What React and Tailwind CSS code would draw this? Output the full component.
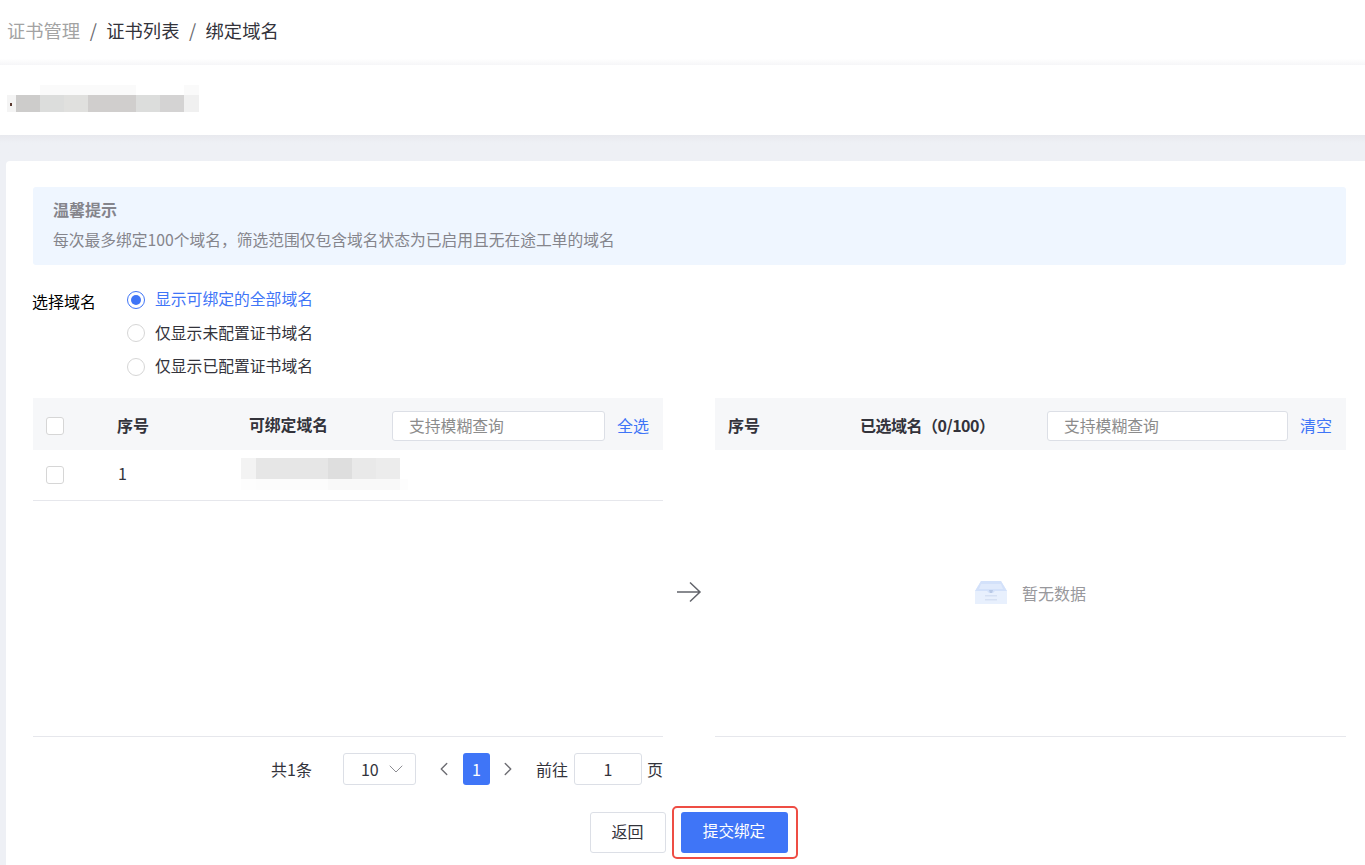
import { ChevronDown, ChevronLeft, ChevronRight } from "lucide-react";

const font = { fontFamily: '"Noto Sans CJK SC", "Liberation Sans", sans-serif' };

const titleBlur = [
  [
    [33, "#ffffff"],
    [96, "#fafafa"],
    [48, "#ffffff"],
    [15, "#fafafa"],
  ],
  [
    [9, "#f4f4f4"],
    [24, "#cdcccb"],
    [24, "#dcdddc"],
    [24, "#e0e0de"],
    [48, "#d0cecd"],
    [24, "#dcdddc"],
    [24, "#d4d3d3"],
    [15, "#f0f0f0"],
  ],
];

const domainBlur = [
  [
    [15, "#f3f3f3"],
    [72, "#e6e6e6"],
    [24, "#dedede"],
    [24, "#e9e9e9"],
    [24, "#ececec"],
  ],
  [
    [15, "#fdfdfd"],
    [72, "#fcfcfc"],
    [72, "#f9f9f9"],
    [8, "#fdfdfd"],
  ],
];

const Blur = ({ rows, heights }) => (
  <div className="flex flex-col">
    {rows.map((row, i) => (
      <div key={i} className="flex" style={{ height: heights[i] }}>
        {row.map(([w, c], j) => (
          <div key={j} style={{ width: w, background: c }} />
        ))}
      </div>
    ))}
  </div>
);

const Radio = ({ checked, children }) => (
  <label className="flex items-center h-[33.5px]">
    <span
      className={`w-[18px] h-[18px] rounded-full border flex items-center justify-center ${
        checked ? "border-[#3f75f7]" : "border-[#d6d6d6]"
      }`}
    >
      {checked && <span className="w-[10px] h-[10px] rounded-full bg-[#3f75f7]" />}
    </span>
    <span className={`ml-[10px] mb-[1px] text-[15.8px] ${checked ? "text-[#3f75f7]" : "text-[#33333b]"}`}>
      {children}
    </span>
  </label>
);

const Checkbox = () => (
  <span className="block w-[18px] h-[18px] rounded-[3px] border border-[#d6d6d6] bg-white" />
);

const SearchInput = ({ className }) => (
  <div
    className={`h-[30px] pl-4 flex items-center rounded-[3px] border border-[#dcdfe6] bg-white text-[#8c8c8c] text-[15.8px] ${className}`}
  >
    支持模糊查询
  </div>
);

const EmptyIcon = () => (
  <svg width="32" height="23" viewBox="0 0 32 23">
    <path d="M6 0H26L32 10V23H0V10Z" fill="#e8f0fd" />
    <path d="M6 0H26L32 10H20L18 12H14L12 10H0Z" fill="#d3e1fa" />
    <path d="M4 8L6 3H26L28 8Z" fill="#e0eafc" />
    <path d="M14 9H18L17 12H15Z" fill="#b9c9e6" />
    <rect x="10" y="14" width="12" height="1.5" fill="#d5e0f3" />
    <rect x="10" y="18" width="12" height="1.5" fill="#d5e0f3" />
  </svg>
);

export default function App() {
  return (
    <div style={font} className="h-[865px] overflow-hidden bg-[#eef0f5] text-[#33333b]">
      <div className="h-[65px] bg-white pl-[7px] pt-[15px] text-[18.3px] leading-[30px] flex gap-[9.5px] bg-gradient-to-b from-white from-[90%] to-[#f6f6f8]">
        <span className="text-[#a3a3a3]">证书管理</span>
        <span className="text-[#6a6a70]">/</span>
        <span>证书列表</span>
        <span className="text-[#6a6a70]">/</span>
        <span>绑定域名</span>
      </div>
      <div className="h-[70px] bg-white pl-[7px] pt-[20px]">
        <div className="relative">
          <Blur rows={titleBlur} heights={[10, 17]} />
          <span className="absolute left-[3px] top-[18px] w-[2px] h-[3px] bg-[#5a3a30]" />
        </div>
      </div>
      <div className="h-[26px] bg-gradient-to-b from-[#e8e9ee] to-[#eef0f5] to-[30%]" />

      <div className="ml-[6px] h-[704px] bg-white rounded-tl-[4px] pt-[26px] pl-[27px] pr-[19px]">
        <div className="h-[78px] bg-[#eff6ff] rounded-[3px] pl-5 pt-[9px] text-base leading-[26px] text-[#85858c]">
          <div className="font-bold">温馨提示</div>
          <div className="mt-[5px] text-[15.75px]">每次最多绑定100个域名，筛选范围仅包含域名状态为已启用且无在途工单的域名</div>
        </div>

        <div className="flex mt-[18px]">
          <div className="w-[95px] -ml-px pt-[4px] text-base leading-[28px] text-black">选择域名</div>
          <div className="flex flex-col">
            <Radio checked>显示可绑定的全部域名</Radio>
            <Radio>仅显示未配置证书域名</Radio>
            <Radio>仅显示已配置证书域名</Radio>
          </div>
        </div>

        <div className="flex mt-[14px]">
          <div className="w-[630px] h-[339px] flex flex-col border-b border-[#e6e7ec]">
            <div className="h-[52px] bg-[#f6f7f9] flex items-center pl-[13px] pt-1 text-base">
              <Checkbox />
              <span className="ml-[53px] w-[132px] mb-[2px] font-bold">序号</span>
              <span className="w-[143px] mb-[2px] font-bold text-[15.8px]">可绑定域名</span>
              <SearchInput className="w-[213px]" />
              <span className="ml-3 mb-[2px] text-[#3f75f7]">全选</span>
            </div>
            <div className="h-[51px] border-b border-[#e6e7ec] flex items-center pl-[13px] text-base">
              <Checkbox />
              <span className="ml-[54px] w-[123px] mb-[4px]">1</span>
              <div className="-mt-[1px]">
                <Blur rows={domainBlur} heights={[21, 11]} />
              </div>
            </div>
          </div>

          <div className="w-[52px] h-[339px] flex items-center justify-center pt-[49px]">
            <svg width="26" height="22" viewBox="0 0 26 22" fill="none" stroke="#62646b" strokeWidth="1.5">
              <path d="M1 11H24M14 1.5L24 11L14 20.5" />
            </svg>
          </div>

          <div className="w-[631px] h-[339px] flex flex-col border-b border-[#e6e7ec]">
            <div className="h-[52px] bg-[#f6f7f9] flex items-center pl-[13px] pt-1 text-base">
              <span className="w-[132px] mb-[2px] font-bold">序号</span>
              <span className="w-[187px] mb-[2px] font-bold tracking-[-0.5px]">已选域名（0/100）</span>
              <SearchInput className="w-[241px]" />
              <span className="ml-3 mb-[2px] text-[#3f75f7]">清空</span>
            </div>
            <div className="flex-1 flex items-center justify-center gap-[15px] text-base text-[#98989c]">
              <EmptyIcon />
              <span>暂无数据</span>
            </div>
          </div>
        </div>

        <div className="w-[630px] mt-[16px] h-[32px] flex items-center justify-end text-base">
          <span>共1条</span>
          <div className="ml-[31px] w-[73px] h-[32px] flex items-center pl-[17px] rounded-[3px] border border-[#dcdfe6]">
            <span>10</span>
            <ChevronDown size={24} strokeWidth={1} color="#8d8d92" className="ml-[5px]" />
          </div>
          <ChevronLeft size={22} strokeWidth={1.5} color="#6c6c72" className="ml-[17px]" />
          <span className="ml-[8px] w-[27px] h-[32px] flex items-center justify-center rounded-[3px] bg-[#3f75f7] text-white">1</span>
          <ChevronRight size={22} strokeWidth={1.5} color="#6c6c72" className="ml-[7px]" />
          <span className="ml-[17px]">前往</span>
          <div className="ml-[6px] w-[68px] h-[32px] flex items-center justify-center rounded-[3px] border border-[#dcdfe6]">1</div>
          <span className="ml-[5px]">页</span>
        </div>

        <div className="mt-[27px] pr-[2px] flex justify-center gap-[15px] text-base">
          <button className="w-[76px] h-[41px] pb-[2px] rounded-[3px] border border-[#dcdfe6] bg-white">返回</button>
          <div className="relative">
            <button className="w-[107px] h-[41px] pb-[2px] rounded-[3px] bg-[#3f75f7] text-white text-[15.6px]">提交绑定</button>
            <div className="absolute -left-[9px] -right-[10px] -top-[6px] -bottom-[6px] border-2 border-[#ee4d44] rounded-[5px]" />
          </div>
        </div>
      </div>
    </div>
  );
}
